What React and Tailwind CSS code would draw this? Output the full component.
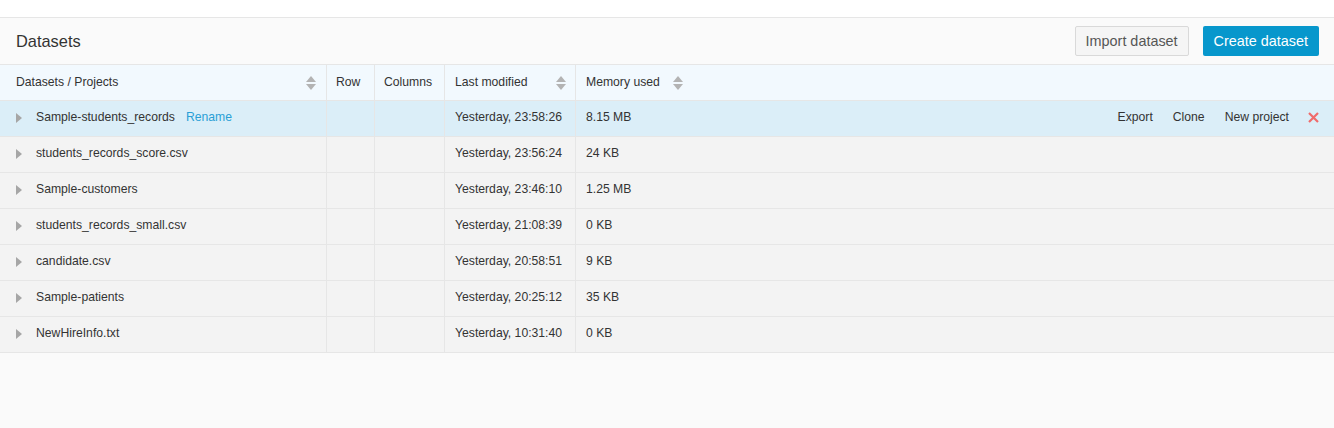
import React from "react";

const rows = [
  { name: "Sample-students_records", date: "Yesterday, 23:58:26", mem: "8.15 MB", selected: true },
  { name: "students_records_score.csv", date: "Yesterday, 23:56:24", mem: "24 KB" },
  { name: "Sample-customers", date: "Yesterday, 23:46:10", mem: "1.25 MB" },
  { name: "students_records_small.csv", date: "Yesterday, 21:08:39", mem: "0 KB" },
  { name: "candidate.csv", date: "Yesterday, 20:58:51", mem: "9 KB" },
  { name: "Sample-patients", date: "Yesterday, 20:25:12", mem: "35 KB" },
  { name: "NewHireInfo.txt", date: "Yesterday, 10:31:40", mem: "0 KB" },
];

function Sort() {
  return (
    <svg width="10" height="14" viewBox="0 0 10 14" className="shrink-0">
      <path d="M5 0 L10 6 L0 6 Z" fill="#b3b3b3" />
      <path d="M0 8 L10 8 L5 14 Z" fill="#b3b3b3" />
    </svg>
  );
}

function Caret() {
  return (
    <svg width="6" height="10" viewBox="0 0 6 10" className="shrink-0">
      <path d="M0 0 L6 5 L0 10 Z" fill="#a6a6a6" />
    </svg>
  );
}

export default function App() {
  return (
    <div
      className="w-[1334px] h-[428px] bg-[#fafafa] text-[#333] overflow-hidden"
      style={{ fontFamily: '"Liberation Sans", Arial, sans-serif' }}
    >
      <div className="h-[17px] bg-white border-b border-[#e6e6e6] box-content" />
      <div className="h-[46px] flex items-center justify-between pl-4 pr-[15px] border-b border-[#e6e6e6] box-content">
        <div className="text-[16.4px] text-[#333]">Datasets</div>
        <div className="flex items-center gap-[14px]">
          <button className="h-[30px] px-[10px] pt-[1px] border border-[#d9d9d9] bg-[#f5f5f5] text-[14.4px] text-[#555] rounded-[2px]">
            Import dataset
          </button>
          <button className="h-[30px] px-[11px] pt-[1px] bg-[#0797cc] text-white text-[14.4px] rounded-[2px]">
            Create dataset
          </button>
        </div>
      </div>
      <div className="flex h-[35px] bg-[#f2f9fe] border-b border-[#e6e6e6] box-content text-[12.2px] text-[#333]">
        <div className="w-[327px] flex items-center justify-between pl-4 pr-[10px] border-r border-[#e6e6e6]">
          <span>Datasets / Projects</span>
          <Sort />
        </div>
        <div className="w-[48px] flex items-center pl-[9px] border-r border-[#e6e6e6]">Row</div>
        <div className="w-[70px] flex items-center pl-[9px] border-r border-[#e6e6e6]">Columns</div>
        <div className="w-[131px] flex items-center justify-between pl-[10px] pr-[9px] border-r border-[#e6e6e6]">
          <span>Last modified</span>
          <Sort />
        </div>
        <div className="flex-1 flex items-center gap-[13px] pl-[10px]">
          <span>Memory used</span>
          <Sort />
        </div>
      </div>
      {rows.map((r) => (
        <div
          key={r.name}
          className={`flex h-[35px] border-b border-[#e6e6e6] box-content text-[12.2px] text-[#333] ${
            r.selected ? "bg-[#dbeef8]" : "bg-[#f3f3f3]"
          }`}
        >
          <div className="w-[327px] flex items-center pl-4 pb-[2px] border-r border-[#e6e6e6]">
            <Caret />
            <span className="ml-[14px]">{r.name}</span>
            {r.selected && <span className="ml-[11px] text-[#2a9fd6]">Rename</span>}
          </div>
          <div className="w-[48px] border-r border-[#e6e6e6]" />
          <div className="w-[70px] border-r border-[#e6e6e6]" />
          <div className="w-[131px] flex items-center pl-[10px] pb-[2px] border-r border-[#e6e6e6]">{r.date}</div>
          <div className="flex-1 flex items-center justify-between pl-[10px] pr-[15px] pb-[2px]">
            <span>{r.mem}</span>
            {r.selected && (
              <div className="flex items-center">
                <span>Export</span>
                <span className="ml-[20px]">Clone</span>
                <span className="ml-[20px]">New project</span>
                <svg width="11" height="11" viewBox="0 0 11 11" className="ml-[19px]">
                  <path d="M1 1 L10 10 M10 1 L1 10" stroke="#f06b6b" strokeWidth="2.2" />
                </svg>
              </div>
            )}
          </div>
        </div>
      ))}
    </div>
  );
}
